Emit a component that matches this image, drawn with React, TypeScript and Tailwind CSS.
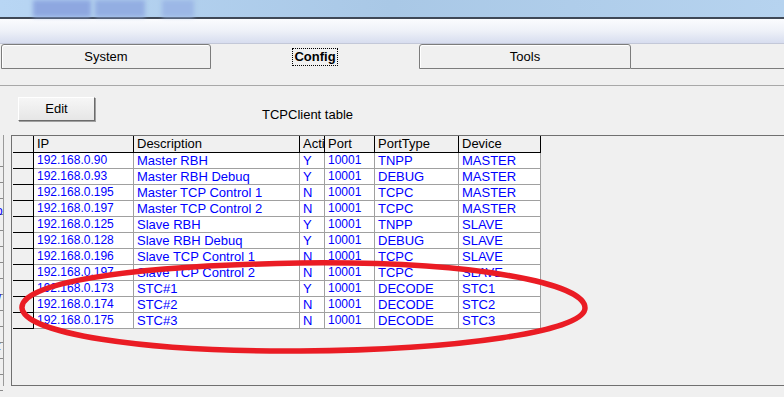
import React from "react";

const rows = [
  ["192.168.0.90", "Master RBH", "Y", "10001", "TNPP", "MASTER"],
  ["192.168.0.93", "Master RBH Debuq", "Y", "10001", "DEBUG", "MASTER"],
  ["192.168.0.195", "Master TCP Control 1", "N", "10001", "TCPC", "MASTER"],
  ["192.168.0.197", "Master TCP Control 2", "N", "10001", "TCPC", "MASTER"],
  ["192.168.0.125", "Slave RBH", "Y", "10001", "TNPP", "SLAVE"],
  ["192.168.0.128", "Slave RBH Debuq", "Y", "10001", "DEBUG", "SLAVE"],
  ["192.168.0.196", "Slave TCP Control 1", "N", "10001", "TCPC", "SLAVE"],
  ["192.168.0.197", "Slave TCP Control 2", "N", "10001", "TCPC", "SLAVE"],
  ["192.168.0.173", "STC#1", "Y", "10001", "DECODE", "STC1"],
  ["192.168.0.174", "STC#2", "N", "10001", "DECODE", "STC2"],
  ["192.168.0.175", "STC#3", "N", "10001", "DECODE", "STC3"],
];

const cols = [
  { name: "IP", w: "w-[100px]", num: true },
  { name: "Description", w: "w-[166px]", num: false },
  { name: "Acti", w: "w-[25px]", num: false },
  { name: "Port", w: "w-[50px]", num: true },
  { name: "PortType", w: "w-[84px]", num: false },
  { name: "Device", w: "w-[82px]", num: false },
];

const Tab = ({ label, width }: { label: string; width: string }) => (
  <div
    className={`${width} flex items-center justify-center rounded-t-[3px] border border-[#7c7c7c] bg-[#f0f0f0] text-[13px] text-black shadow-[inset_1px_1px_0_#ffffff]`}
  >
    {label}
  </div>
);

const TcpTable = () => (
  <div className="flex flex-col text-[13px]">
    <div className="flex h-[17px]">
      <div className="w-[21px] border-r border-b border-black bg-[#f0f0f0]" />
      {cols.map((c) => (
        <div
          key={c.name}
          className={`${c.w} overflow-hidden whitespace-nowrap border-r border-b border-black bg-[#f0f0f0] pl-[3px] leading-[16px] text-black`}
        >
          {c.name}
        </div>
      ))}
    </div>
    {rows.map((r, i) => (
      <div key={i} className="flex h-[16px]">
        <div className="w-[21px] border-r border-b border-black bg-[#f0f0f0]" />
        {r.map((v, j) => (
          <div
            key={j}
            className={`${cols[j].w} overflow-hidden whitespace-nowrap border-r border-b border-[#a0a0a0] bg-white pl-[3px] leading-[15px] text-[#0000ff] ${
              cols[j].num ? "text-[12px]" : ""
            }`}
          >
            {v}
          </div>
        ))}
      </div>
    ))}
  </div>
);

export default function App() {
  return (
    <div className="relative h-[397px] w-[784px] overflow-hidden bg-[#f0f0f0] font-['Liberation_Sans',Arial,sans-serif]">
      {/* window title bar, blurred */}
      <div className="flex h-[17px] items-stretch bg-gradient-to-r from-[#b8d6f4] via-[#a9c8e6] to-[#b6d3ef]">
        <div className="ml-[33px] w-[58px] bg-[#8ea7e0] blur-[2px]" />
        <div className="ml-[4px] w-[50px] bg-[#93aee2] blur-[2px]" />
        <div className="ml-[17px] w-[32px] bg-[#9cb7e6] blur-[2px]" />
      </div>
      <div className="h-[2px] bg-[#3f4856]" />
      <div className="h-[24px] bg-gradient-to-b from-[#fbfcfe] via-[#eef1f8] to-[#d7ddef]" />
      <div className="h-px bg-[#c3c8d8]" />

      {/* tabs */}
      <div className="flex h-[25px]">
        <div className="ml-px flex">
          <Tab label="System" width="w-[210px]" />
        </div>
        <div className="flex w-[208px] items-center justify-center">
          <span className="border border-dotted border-black px-px text-[13px] leading-[16px] font-bold text-black">
            Config
          </span>
        </div>
        <Tab label="Tools" width="w-[212px]" />
        <div className="flex-1 border-b border-[#7c7c7c]" />
      </div>

      <div className="h-[16px]" />
      <div className="h-px bg-[#a8a8a8]" />

      {/* toolbar */}
      <div className="flex h-[49px] items-start pl-[18px] pt-[11px]">
        <button className="h-[24px] w-[77px] border border-t-white border-l-white border-r-[#6b6b6b] border-b-[#6b6b6b] bg-gradient-to-b from-[#f6f6f6] to-[#e6e6e6] text-[13px] text-black shadow-[1px_1px_0_#a0a0a0]">
          Edit
        </button>
        <span className="ml-[167px] mt-[10px] text-[13px] leading-[16px] text-black">
          TCPClient table
        </span>
      </div>

      {/* grid area */}
      <div className="flex h-[251px]">
        <div className="relative w-[11px]">
          <div className="ml-[3px] h-full border-l border-[#9a9a9a]" />
          <div className="absolute top-[16px] left-0 flex flex-col">
            {Array.from(Array(15)).map((_, i) => (
              <div key={i} className="h-[16px] w-[3px] border-b border-[#8a8a8a]" />
            ))}
          </div>
          <span className="absolute top-[67px] -left-[4px] text-[12px] text-[#0000ff]">o</span>
          <span className="absolute top-[155px] -left-[2px] text-[11px] text-[#0000ff]">/</span>
          <span className="absolute top-[202px] -left-[3px] text-[12px] text-[#0000ff]">t</span>
        </div>
        <div className="flex-1 border-t border-b border-l border-[#707070] pl-px">
          <TcpTable />
        </div>
      </div>

      {/* red annotation */}
      <svg className="pointer-events-none absolute top-0 left-0" width="784" height="397">
        <path
          d="M 22 308 C 20 284, 120 266, 300 263 C 480 261, 585 284, 585 308 C 585 331, 460 350, 300 351 C 140 352, 24 333, 22 308 Z"
          fill="none"
          stroke="#ea1c24"
          strokeWidth="5.5"
        />
      </svg>
    </div>
  );
}
